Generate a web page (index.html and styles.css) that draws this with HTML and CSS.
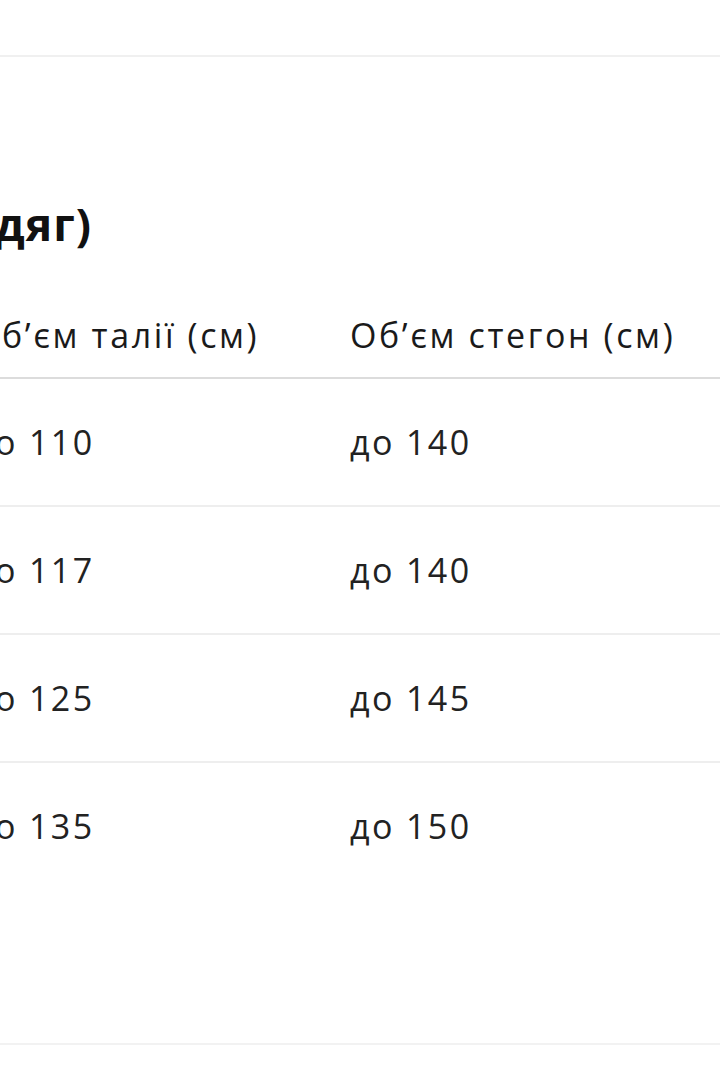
FILE: index.html
```html
<!DOCTYPE html>
<html lang="uk">
<head>
<meta charset="utf-8">
<link rel="stylesheet" href="styles.css">
</head>
<body>
<div class="topbar"></div>
<div class="content">
  <div class="title-box"><h2 class="title">Таблиця розмірів (верхній одяг)</h2></div>
  <table class="sizes">
    <thead>
      <tr><th>Об’єм талії (см)</th><th>Об’єм стегон (см)</th><th>Розмір</th></tr>
    </thead>
    <tbody>
      <tr><td>до 110</td><td>до 140</td><td>52</td></tr>
      <tr><td>до 117</td><td>до 140</td><td>54</td></tr>
      <tr><td>до 125</td><td>до 145</td><td>56</td></tr>
      <tr class="last"><td>до 135</td><td>до 150</td><td>58</td></tr>
    </tbody>
  </table>
</div>
<div class="footer-line"></div>
</body>
</html>
```
FILE: styles.css
```css
html, body {
  margin: 0;
  padding: 0;
  background: #ffffff;
  overflow: hidden;
}
body {
  width: 720px;
  height: 1080px;
  font-family: "Open Sans", "Noto Sans", sans-serif;
  color: #1c1c1c;
}
.topbar {
  height: 55px;
  border-bottom: 2px solid #f0f0f0;
}
.content {
  margin-left: -27px;
}
.title-box {
  margin-top: 136px;
  margin-left: 27px;
  width: 92px;
  display: flex;
  justify-content: flex-end;
}
.title {
  margin: 0;
  white-space: nowrap;
  font-size: 45px;
  line-height: 62px;
  font-weight: 700;
  letter-spacing: 1px;
  color: #111;
}
.sizes {
  margin-top: 38px;
  border-collapse: collapse;
  table-layout: fixed;
  width: 1131px;
}
.sizes th, .sizes td {
  width: 377px;
  text-align: left;
  padding: 0;
  white-space: nowrap;
}
.sizes th {
  font-size: 34px;
  font-weight: 500;
  letter-spacing: 2.6px;
  line-height: 44px;
  padding: 20px 0;
  color: #1a1a1a;
  border-bottom: 2px solid #dcdcdc;
}
.sizes td {
  font-size: 34px;
  font-weight: 400;
  letter-spacing: 2.4px;
  height: 126px;
  color: #222;
  border-bottom: 2px solid #eeeeee;
}
.sizes tr.last td {
  border-bottom: none;
}
.footer-line {
  margin-top: 154px;
  border-bottom: 2px solid #f2f2f2;
}
```
